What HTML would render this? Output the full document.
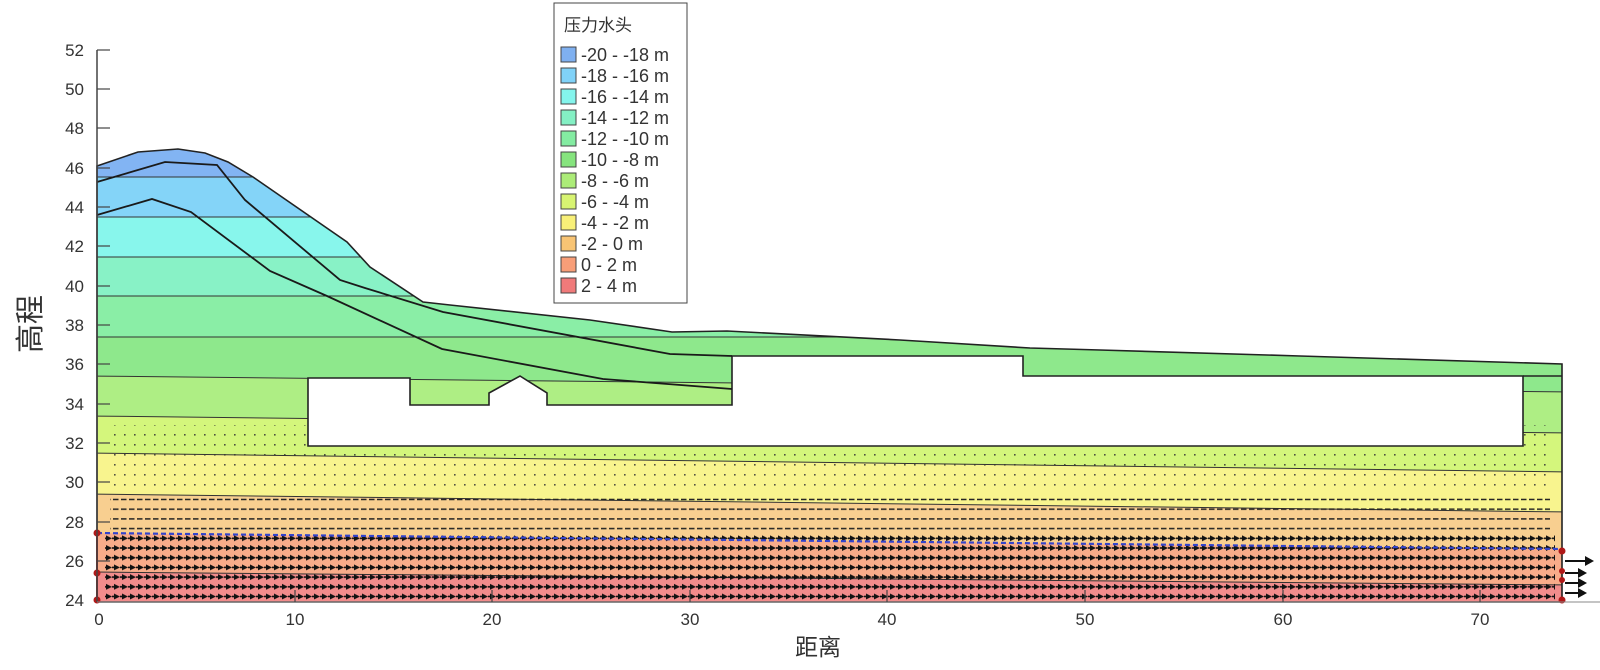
<!DOCTYPE html>
<html><head><meta charset="utf-8"><style>
html,body{margin:0;padding:0;background:#fff;width:1600px;height:670px;overflow:hidden}
svg{display:block}
text{font-family:"Liberation Sans","Noto Sans CJK SC",sans-serif;fill:#333}
</style></head><body>
<svg width="1600" height="670" viewBox="0 0 1600 670" xmlns="http://www.w3.org/2000/svg">
<defs>
<clipPath id="dom"><path d="M97,166 L138,152 L178,149 L205,153 L228,162 L253,177 L347,242 L370,267 L423,302 L450,305 L590,320 L672,332 L727,331 L900,340 L1030,348 L1100,350 L1300,356 L1562,364 L1562,602 L97,602 Z"/></clipPath>
<pattern id="arr" x="0" y="0" width="8" height="9.7" patternUnits="userSpaceOnUse">
<line x1="0" y1="4.8" x2="3" y2="4.8" stroke="#111" stroke-width="1.6"/>
<path d="M2,1.8 L8,4.8 L2,7.8 Z" fill="#111"/>
</pattern>
<pattern id="dsh" x="0" y="0" width="8" height="9.7" patternUnits="userSpaceOnUse">
<line x1="1" y1="4.8" x2="6.5" y2="4.8" stroke="#222" stroke-width="1.5"/>
</pattern>
<pattern id="dot" x="0" y="0" width="10" height="10" patternUnits="userSpaceOnUse">
<rect x="4" y="4" width="1.6" height="1.6" fill="#333"/>
</pattern>
</defs>
<g clip-path="url(#dom)">
<rect x="90" y="140" width="1480" height="470" fill="#82b4f3"/>
<polygon points="90,177 1570,177 1570,610 90,610" fill="#84d4f8"/>
<polygon points="90,217 1570,217 1570,610 90,610" fill="#88f6ec"/>
<polygon points="90,257 1570,257 1570,610 90,610" fill="#88f2c6"/>
<polygon points="90,296 1570,296 1570,610 90,610" fill="#8aeea6"/>
<polygon points="90,337 1570,337 1570,610 90,610" fill="#8ee88c"/>
<polygon points="90,376 1570,392 1570,610 90,610" fill="#aeee84"/>
<polygon points="90,416 1570,433 1570,610 90,610" fill="#d4f67c"/>
<polygon points="90,453 1570,472 1570,610 90,610" fill="#f8f48e"/>
<polygon points="90,494 1570,512 1570,610 90,610" fill="#f8cf90"/>
<polygon points="90,533 1570,549 1570,610 90,610" fill="#f8ac8a"/>
<polygon points="90,572 1570,585 1570,610 90,610" fill="#f28c8c"/>
<g stroke="#333" stroke-width="1" fill="none">
<line x1="90" y1="177" x2="1570" y2="177"/><line x1="90" y1="217" x2="1570" y2="217"/>
<line x1="90" y1="257" x2="1570" y2="257"/><line x1="90" y1="296" x2="1570" y2="296"/>
<line x1="90" y1="337" x2="1570" y2="337"/><line x1="90" y1="376" x2="1570" y2="392"/>
<line x1="90" y1="416" x2="1570" y2="433"/><line x1="90" y1="453" x2="1570" y2="472"/>
<line x1="90" y1="494" x2="1570" y2="512"/><line x1="90" y1="572" x2="1570" y2="585"/>
</g>
<rect x="110" y="425" width="1440" height="69" fill="url(#dot)" opacity="0.85"/>
<rect x="110" y="495" width="1440" height="37" fill="url(#dsh)"/>
<rect x="105" y="533" width="1450" height="68" fill="url(#arr)"/>
<line x1="97" y1="533" x2="1562" y2="549" stroke="#3344cc" stroke-width="2.2" stroke-dasharray="5,3"/>
</g>
<path d="M97,166 L138,152 L178,149 L205,153 L228,162 L253,177 L347,242 L370,267 L423,302 L450,305 L590,320 L672,332 L727,331 L900,340 L1030,348 L1100,350 L1300,356 L1562,364 L1562,602 L97,602 Z" fill="none" stroke="#222" stroke-width="1.6"/>
<path d="M308,378 L410,378 L410,405 L489,405 L489,393 L520,376 L547,393 L547,405 L732,405 L732,356 L1023,356 L1023,376 L1523,376 L1523,446 L308,446 Z" fill="#fff" stroke="#222" stroke-width="1.6"/>
<line x1="1523" y1="376" x2="1562" y2="376" stroke="#222" stroke-width="1.4"/>
<polyline points="97,182 165,162 217,165 245,200 340,280 365,288 443,312 670,354 732,356" fill="none" stroke="#1a1a1a" stroke-width="1.8"/>
<polyline points="97,215 152,199 191,212 270,271 327,296 442,349 603,379 732,389" fill="none" stroke="#1a1a1a" stroke-width="1.8"/>
<line x1="97" y1="533" x2="97" y2="602" stroke="#8b1a1a" stroke-width="2"/>
<g fill="#b01818"><circle cx="97" cy="533" r="3.5"/><circle cx="97" cy="573" r="3.5"/><circle cx="97" cy="600" r="3.5"/><circle cx="1562" cy="551" r="3.5"/><circle cx="1562" cy="571" r="3"/><circle cx="1562" cy="580" r="3"/><circle cx="1562" cy="600" r="3.5"/></g>
<g fill="#111"><path d="M1565,560 L1585,560 L1585,556 L1594,561 L1585,566 L1585,562 L1565,562Z"/><path d="M1565,572 L1578,572 L1578,568 L1587,573 L1578,578 L1578,574 L1565,574Z"/><path d="M1565,582 L1578,582 L1578,578 L1587,583 L1578,588 L1578,584 L1565,584Z"/><path d="M1565,592 L1578,592 L1578,588 L1587,593 L1578,598 L1578,594 L1565,594Z"/></g>
<line x1="97" y1="50" x2="97" y2="602" stroke="#444" stroke-width="1.5"/>
<line x1="97" y1="602" x2="1600" y2="602" stroke="#888" stroke-width="1"/>
<g stroke="#444" stroke-width="1.2">
<line x1="97" y1="50" x2="110" y2="50"/><line x1="97" y1="89" x2="110" y2="89"/><line x1="97" y1="128" x2="110" y2="128"/><line x1="97" y1="168" x2="110" y2="168"/><line x1="97" y1="207" x2="110" y2="207"/><line x1="97" y1="246" x2="110" y2="246"/><line x1="97" y1="286" x2="110" y2="286"/><line x1="97" y1="325" x2="110" y2="325"/><line x1="97" y1="364" x2="110" y2="364"/><line x1="97" y1="404" x2="110" y2="404"/><line x1="97" y1="443" x2="110" y2="443"/><line x1="97" y1="482" x2="110" y2="482"/><line x1="97" y1="522" x2="110" y2="522"/><line x1="97" y1="561" x2="110" y2="561"/>
<line x1="295" y1="602" x2="295" y2="590"/><line x1="492" y1="602" x2="492" y2="590"/><line x1="690" y1="602" x2="690" y2="590"/><line x1="887" y1="602" x2="887" y2="590"/><line x1="1085" y1="602" x2="1085" y2="590"/><line x1="1283" y1="602" x2="1283" y2="590"/><line x1="1480" y1="602" x2="1480" y2="590"/>
</g>
<g font-size="17" text-anchor="end">
<text x="84" y="56">52</text><text x="84" y="95">50</text><text x="84" y="134">48</text><text x="84" y="174">46</text><text x="84" y="213">44</text><text x="84" y="252">42</text><text x="84" y="292">40</text><text x="84" y="331">38</text><text x="84" y="370">36</text><text x="84" y="410">34</text><text x="84" y="449">32</text><text x="84" y="488">30</text><text x="84" y="528">28</text><text x="84" y="567">26</text><text x="84" y="606">24</text>
</g>
<g font-size="17" text-anchor="middle">
<text x="99" y="625">0</text><text x="295" y="625">10</text><text x="492" y="625">20</text><text x="690" y="625">30</text><text x="887" y="625">40</text><text x="1085" y="625">50</text><text x="1283" y="625">60</text><text x="1480" y="625">70</text>
</g>
<text x="818" y="655" font-size="23" text-anchor="middle">距离</text>
<text transform="translate(40,324) rotate(-90)" font-size="29" text-anchor="middle">高程</text>
<rect x="554" y="3" width="133" height="300" fill="#fff" stroke="#444" stroke-width="1"/>
<text x="564" y="31" font-size="17">压力水头</text>
<g stroke="#444" stroke-width="1">
<rect x="561" y="47" width="15" height="15" fill="#7fb0f0"/>
<rect x="561" y="68" width="15" height="15" fill="#80d2f8"/>
<rect x="561" y="89" width="15" height="15" fill="#84f4ec"/>
<rect x="561" y="110" width="15" height="15" fill="#84f0c4"/>
<rect x="561" y="131" width="15" height="15" fill="#84eca2"/>
<rect x="561" y="152" width="15" height="15" fill="#86e47e"/>
<rect x="561" y="173" width="15" height="15" fill="#acec78"/>
<rect x="561" y="194" width="15" height="15" fill="#d8f472"/>
<rect x="561" y="215" width="15" height="15" fill="#f8f078"/>
<rect x="561" y="236" width="15" height="15" fill="#f8c474"/>
<rect x="561" y="257" width="15" height="15" fill="#f89e78"/>
<rect x="561" y="278" width="15" height="15" fill="#f07a7a"/>
</g>
<g font-size="18">
<text x="581" y="61">-20 - -18 m</text><text x="581" y="82">-18 - -16 m</text><text x="581" y="103">-16 - -14 m</text><text x="581" y="124">-14 - -12 m</text><text x="581" y="145">-12 - -10 m</text><text x="581" y="166">-10 - -8 m</text><text x="581" y="187">-8 - -6 m</text><text x="581" y="208">-6 - -4 m</text><text x="581" y="229">-4 - -2 m</text><text x="581" y="250">-2 - 0 m</text><text x="581" y="271">0 - 2 m</text><text x="581" y="292">2 - 4 m</text>
</g>
</svg>
</body></html>
